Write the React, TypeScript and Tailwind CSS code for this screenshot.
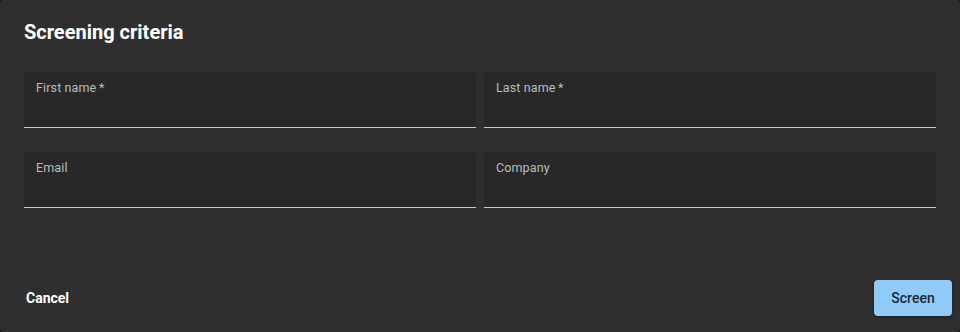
const fields = [
  { label: "First name", required: true },
  { label: "Last name", required: true },
  { label: "Email", required: false },
  { label: "Company", required: false },
];

const Field = ({ label, required }: { label: string; required: boolean }) => (
  <div className="h-14 rounded-t-[4px] bg-[#282828] border-b border-[#c8c8c8] px-3 pt-[3px]">
    <span className="text-[12.5px] leading-[20px] text-[#bdbdbd] tracking-[0.01em]">
      {label}
      {required && <span className="ml-[2.5px]">*</span>}
    </span>
  </div>
);

const App = () => {
  return (
    <div
      className="w-[960px] h-[332px] bg-[#1a1a1a]"
      style={{ fontFamily: "Roboto, 'Liberation Sans', sans-serif" }}>
      <div className="w-full h-full rounded-[4px] bg-[#2f2f2f] flex flex-col">
        <h2 className="px-6 pt-4 h-12 text-[20px] leading-8 font-bold text-white">
          Screening criteria
        </h2>
        <div className="px-6 pt-6 grid grid-cols-2 gap-x-2 gap-y-6">
          {fields.map((f) => (
            <Field key={f.label} label={f.label} required={f.required} />
          ))}
        </div>
        <div className="mt-auto flex items-center justify-between pl-[18px] pr-2 pb-4">
          <button className="px-2 h-9 text-[14px] font-bold text-white">
            Cancel
          </button>
          <button className="w-[78px] h-9 rounded-[4px] bg-[#90caf9] text-[14px] font-medium text-[#1c2833] shadow-[0_1px_3px_rgba(0,0,0,0.4)]">
            Screen
          </button>
        </div>
      </div>
    </div>
  );
};

export default App;
